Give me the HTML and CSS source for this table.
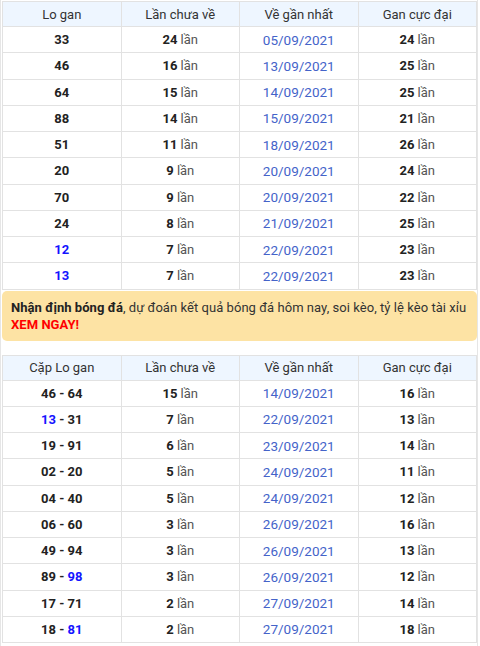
FILE: index.html
```html
<!DOCTYPE html>
<html>
<head>
<meta charset="utf-8">
<link rel="stylesheet" href="styles.css">
</head>
<body>
<div class="page">
  <table class="tbl">
    <thead>
      <tr><th>Lo gan</th><th>Lần chưa về</th><th>Về gần nhất</th><th>Gan cực đại</th></tr>
    </thead>
    <tbody>
      <tr><td class="num">33</td><td><b>24</b> lần</td><td class="date">05/09/2021</td><td><b>24</b> lần</td></tr>
      <tr><td class="num">46</td><td><b>16</b> lần</td><td class="date">13/09/2021</td><td><b>25</b> lần</td></tr>
      <tr><td class="num">64</td><td><b>15</b> lần</td><td class="date">14/09/2021</td><td><b>25</b> lần</td></tr>
      <tr><td class="num">88</td><td><b>14</b> lần</td><td class="date">15/09/2021</td><td><b>21</b> lần</td></tr>
      <tr><td class="num">51</td><td><b>11</b> lần</td><td class="date">18/09/2021</td><td><b>26</b> lần</td></tr>
      <tr><td class="num">20</td><td><b>9</b> lần</td><td class="date">20/09/2021</td><td><b>24</b> lần</td></tr>
      <tr><td class="num">70</td><td><b>9</b> lần</td><td class="date">20/09/2021</td><td><b>22</b> lần</td></tr>
      <tr><td class="num">24</td><td><b>8</b> lần</td><td class="date">21/09/2021</td><td><b>25</b> lần</td></tr>
      <tr><td class="num"><span class="blue">12</span></td><td><b>7</b> lần</td><td class="date">22/09/2021</td><td><b>23</b> lần</td></tr>
      <tr><td class="num"><span class="blue">13</span></td><td><b>7</b> lần</td><td class="date">22/09/2021</td><td><b>23</b> lần</td></tr>
    </tbody>
  </table>
  <div class="banner">
    <b>Nhận định bóng đá</b>, dự đoán kết quả bóng đá hôm nay, soi kèo, tỷ lệ kèo tài xỉu <b class="red">XEM NGAY!</b>
  </div>
  <table class="tbl tbl2">
    <thead>
      <tr><th>Cặp Lo gan</th><th>Lần chưa về</th><th>Về gần nhất</th><th>Gan cực đại</th></tr>
    </thead>
    <tbody>
      <tr><td class="num">46 - 64</td><td><b>15</b> lần</td><td class="date">14/09/2021</td><td><b>16</b> lần</td></tr>
      <tr><td class="num"><span class="blue">13</span> - 31</td><td><b>7</b> lần</td><td class="date">22/09/2021</td><td><b>13</b> lần</td></tr>
      <tr><td class="num">19 - 91</td><td><b>6</b> lần</td><td class="date">23/09/2021</td><td><b>14</b> lần</td></tr>
      <tr><td class="num">02 - 20</td><td><b>5</b> lần</td><td class="date">24/09/2021</td><td><b>11</b> lần</td></tr>
      <tr><td class="num">04 - 40</td><td><b>5</b> lần</td><td class="date">24/09/2021</td><td><b>12</b> lần</td></tr>
      <tr><td class="num">06 - 60</td><td><b>3</b> lần</td><td class="date">26/09/2021</td><td><b>16</b> lần</td></tr>
      <tr><td class="num">49 - 94</td><td><b>3</b> lần</td><td class="date">26/09/2021</td><td><b>13</b> lần</td></tr>
      <tr><td class="num">89 - <span class="blue">98</span></td><td><b>3</b> lần</td><td class="date">26/09/2021</td><td><b>12</b> lần</td></tr>
      <tr><td class="num">17 - 71</td><td><b>2</b> lần</td><td class="date">27/09/2021</td><td><b>14</b> lần</td></tr>
      <tr><td class="num">18 - <span class="blue">81</span></td><td><b>2</b> lần</td><td class="date">27/09/2021</td><td><b>18</b> lần</td></tr>
    </tbody>
  </table>
</div>
</body>
</html>
```
FILE: styles.css
```css
html, body {
  margin: 0;
  padding: 0;
  background: #fff;
}
body {
  font-family: Roboto, "Liberation Sans", Arial, sans-serif;
  font-size: 13px;
  color: #333;
}
.page {
  width: 478px;
  min-height: 646px;
  box-sizing: border-box;
  border-left: 1px solid #e6e6e6;
  border-right: 1px solid #e6e6e6;
  padding: 1px 1px 0 1px;
}
.tbl {
  width: 475px;
  border-collapse: collapse;
  table-layout: fixed;
}
.tbl th, .tbl td {
  border: 1px solid #e2e2e2;
  text-align: center;
  padding: 0;
}
.tbl th {
  height: 24px;
  background: #eef6ff;
  font-weight: 400;
  color: #333;
}
.tbl td {
  height: 25.25px;
  color: #555;
}
.tbl td b {
  color: #222;
  font-weight: 700;
}
.tbl td.num {
  font-weight: 700;
  color: #222;
}
.tbl td.date {
  color: #4463c9;
  font-size: 13.5px;
}
.blue {
  color: #1414ff;
}
.banner {
  margin-top: 1px;
  background: #fde3a4;
  border-radius: 5px;
  padding: 8px 4px 8px 9px;
  font-size: 13px;
  line-height: 17px;
  color: #333;
  width: 475px;
  box-sizing: border-box;
  letter-spacing: 0.05px;
}
.banner b {
  color: #222;
}
.banner b.red {
  display: block;
  color: #ff0000;
}
.tbl2 {
  margin-top: 14px;
}
```
